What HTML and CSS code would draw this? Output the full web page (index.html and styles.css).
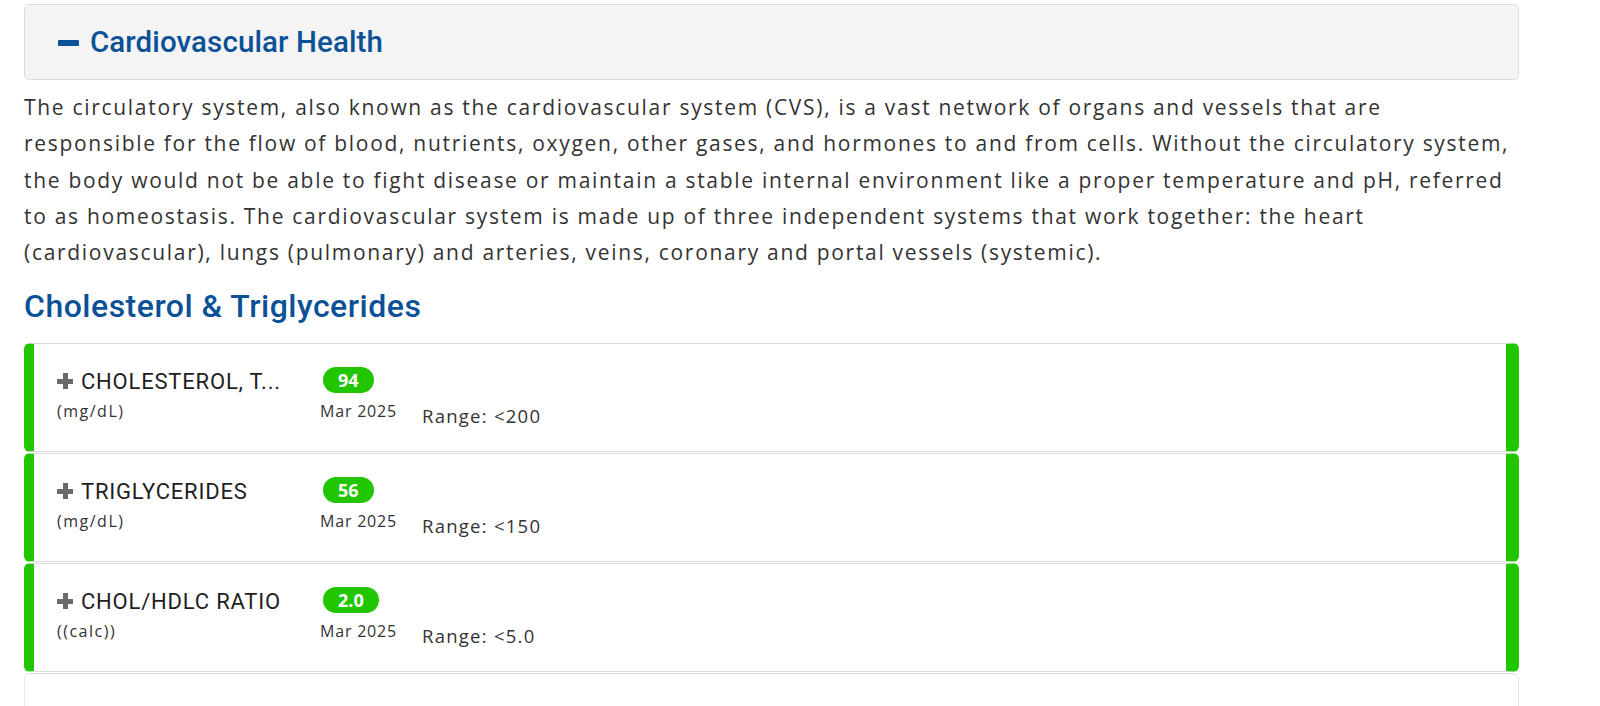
FILE: index.html
```html
<!DOCTYPE html>
<html>
<head>
<meta charset="utf-8">
<link rel="stylesheet" href="styles.css">
</head>
<body>
<div class="page">
  <div class="section-head">
    <span class="minus"></span>
    <span class="section-title">Cardiovascular Health</span>
  </div>
  <p class="intro">The circulatory system, also known as the cardiovascular system (CVS), is a vast network of organs and vessels that are<br>responsible for the flow of blood, nutrients, oxygen, other gases, and hormones to and from cells. Without the circulatory system,<br>the body would not be able to fight disease or maintain a stable internal environment like a proper temperature and pH, referred<br>to as homeostasis. The cardiovascular system is made up of three independent systems that work together: the heart<br>(cardiovascular), lungs (pulmonary) and arteries, veins, coronary and portal vessels (systemic).</p>
  <h2 class="group-title">Cholesterol &amp; Triglycerides</h2>
  <div class="cards">
    <div class="card">
      <div class="col-name">
        <div class="name"><span class="plus"></span>CHOLESTEROL, T...</div>
        <div class="unit">(mg/dL)</div>
      </div>
      <div class="col-val">
        <span class="badge">94</span>
        <div class="date">Mar 2025</div>
      </div>
      <div class="range">Range: &lt;200</div>
    </div>
    <div class="card">
      <div class="col-name">
        <div class="name"><span class="plus"></span>TRIGLYCERIDES</div>
        <div class="unit">(mg/dL)</div>
      </div>
      <div class="col-val">
        <span class="badge">56</span>
        <div class="date">Mar 2025</div>
      </div>
      <div class="range">Range: &lt;150</div>
    </div>
    <div class="card">
      <div class="col-name">
        <div class="name"><span class="plus"></span>CHOL/HDLC RATIO</div>
        <div class="unit">((calc))</div>
      </div>
      <div class="col-val">
        <span class="badge">2.0</span>
        <div class="date">Mar 2025</div>
      </div>
      <div class="range">Range: &lt;5.0</div>
    </div>
    <div class="card card-empty"></div>
  </div>
</div>
</body>
</html>
```
FILE: styles.css
```css
* { box-sizing: border-box; }
html, body { margin: 0; padding: 0; background: #fff; }
body { font-family: "Open Sans", "Noto Sans", sans-serif; color: #333; overflow: hidden; }
.page { padding: 4px 81px 0 24px; }
.section-head {
  height: 76px;
  background: #f4f4f4;
  border: 1px solid #dcdcdc;
  border-radius: 5px;
  display: flex;
  align-items: center;
  padding-left: 33px;
  gap: 11px;
}
.minus { width: 21px; height: 6px; background: #0b5197; border-radius: 1px; margin-top: 1px; }
.section-title { font-family: Roboto, "Open Sans", sans-serif; font-size: 29.5px; font-weight: 500; color: #0b5197; letter-spacing: 0.1px; }
.intro { margin: 9px 0 0; font-size: 21px; line-height: 36.3px; color: #333; letter-spacing: 1.7px; white-space: nowrap; }
.group-title { margin: 16px 0 0; font-family: Roboto, "Open Sans", sans-serif; font-size: 32px; font-weight: 500; color: #0b5197; line-height: 40px; letter-spacing: 0.5px; }
.cards { margin-top: 17px; display: flex; flex-direction: column; gap: 1px; }
.card {
  height: 109px;
  background: #fff;
  border: 1px solid #dcdcdc;
  border-left: 10px solid #21c500;
  border-right: 13px solid #21c500;
  border-radius: 6px;
  display: flex;
  align-items: flex-start;
  padding: 22px 0 0 23px;
}
.card-empty { border-left: 1px solid #e8e8e8; border-right: 1px solid #e8e8e8; }
.col-name { width: 263px; }
.name { display: flex; align-items: center; font-family: Roboto, "Open Sans", sans-serif; font-size: 22px; color: #1e1e1e; height: 30px; letter-spacing: 0.8px; white-space: nowrap; }
.plus { position: relative; width: 16px; height: 16px; margin-right: 8px; flex: none; }
.plus::before, .plus::after { content: ""; position: absolute; background: #6a6a6a; }
.plus::before { left: 0; top: 6px; width: 16px; height: 4.5px; }
.plus::after { left: 6px; top: 0; width: 4.5px; height: 16px; }
.unit { font-size: 16px; color: #333; margin-top: 4px; letter-spacing: 1.5px; }
.col-val { width: 102px; display: flex; flex-direction: column; align-items: flex-start; }
.badge {
  margin-left: 3px;
  background: #21c500;
  color: #fff;
  font-weight: 700;
  font-size: 18px;
  height: 26px;
  line-height: 26px;
  padding: 0 15px;
  border-radius: 13px;
  margin-top: 1px;
}
.date { font-size: 16px; color: #333; margin-top: 7px; letter-spacing: 0.8px; }
.range { font-size: 18.5px; color: #333; margin-top: 37px; letter-spacing: 1.25px; }
```
